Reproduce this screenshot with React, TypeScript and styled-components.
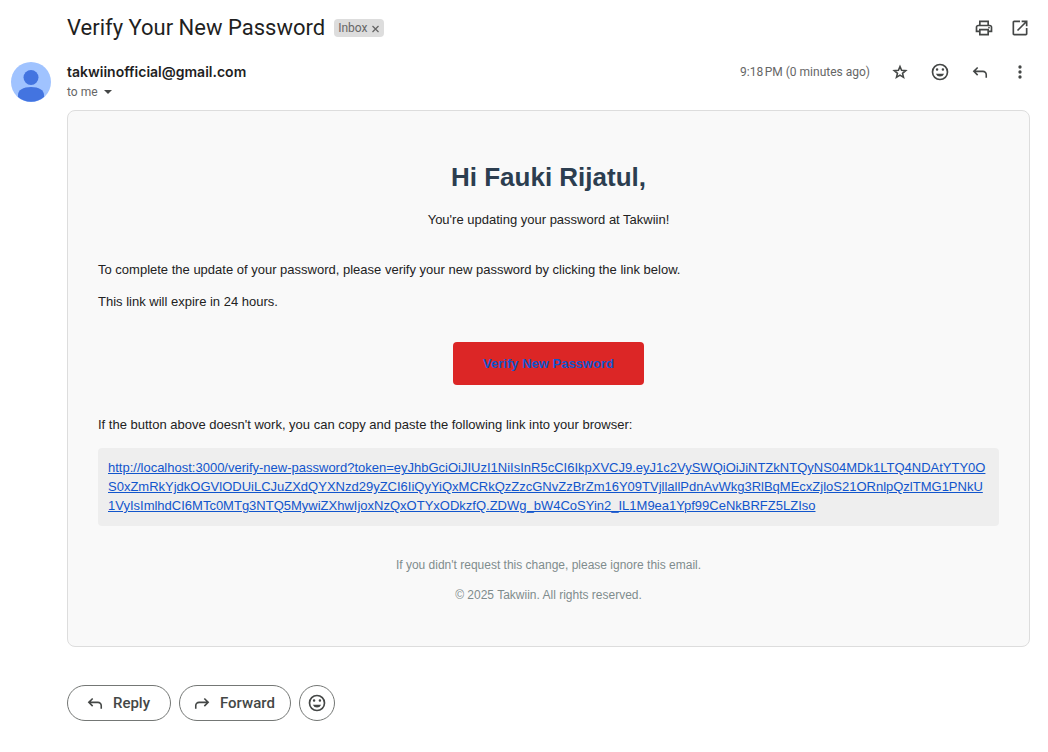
import React from "react";
import styled, { createGlobalStyle } from "styled-components";

const GlobalStyle = createGlobalStyle`
  * { box-sizing: border-box; }
  body { margin: 0; background: #fff; color: #222; font-family: Roboto, "Liberation Sans", sans-serif; }
  button { font-family: inherit; }
`;

const Page = styled.main`
  display: flex;
  flex-direction: column;
  padding: 10px 18px 31px 11px;
`;

const Bar = styled.header`
  display: flex;
  align-items: center;
  height: 36px;
  padding-left: 56px;
`;

const Title = styled.h1`
  margin: 0 9px 0 0;
  font-size: 22px;
  font-weight: 400;
  line-height: 28px;
  color: #1f1f1f;
`;

const Label = styled.span`
  display: flex;
  align-items: center;
  gap: 4px;
  height: 18px;
  padding: 0 4px;
  border-radius: 4px;
  background: #ddd;
  color: #666;
  font-size: 12px;
  line-height: 18px;
`;

const IconButton = styled.button`
  display: flex;
  align-items: center;
  justify-content: center;
  width: 20px;
  height: 20px;
  padding: 0;
  border: 0;
  background: none;
  color: #444746;
`;

const RemoveButton = styled(IconButton)`
  width: 9px;
  height: 18px;
  color: #666;
`;

const Actions = styled.div<{ $gap: number }>`
  display: flex;
  align-items: center;
  gap: ${(p) => p.$gap}px;
  height: 20px;
  margin-left: auto;
`;

const Sender = styled.section`
  display: flex;
  height: 64px;
  padding-top: 16px;
`;

const Avatar = styled.svg`
  width: 40px;
  height: 40px;
  margin-right: 16px;
`;

const Names = styled.div`
  display: flex;
  flex-direction: column;
`;

const Address = styled.h2`
  margin: 0;
  font: 600 14px/20px Inter, "Liberation Sans", sans-serif;
  color: #1f1f1f;
`;

const Recipient = styled.button`
  display: flex;
  align-items: center;
  gap: 6px;
  padding: 0;
  border: 0;
  background: none;
  color: #666;
  font-size: 12px;
  line-height: 20px;
`;

const Time = styled.time`
  color: #666;
  font-size: 12px;
  line-height: 20px;
`;

const Message = styled.article`
  margin-left: 56px;
  padding: 30px;
  border: 1px solid #ddd;
  border-radius: 8px;
  background: #f9f9f9;
  color: #222;
  font-family: "Liberation Sans", Arial, sans-serif;
  font-size: 13px;
  line-height: 20px;
`;

const Intro = styled.div`
  padding: 20px 0 18px;
  text-align: center;
`;

const Greeting = styled.h2`
  margin: 0 0 17px;
  color: #2c3e50;
  font-size: 26px;
  line-height: 32px;
`;

const Text = styled.p`
  margin: 0 0 12px;
`;

const Cta = styled.div`
  display: flex;
  justify-content: center;
  padding: 18px 0 30px;
`;

const CtaLink = styled.a`
  padding: 12px 30px;
  border-radius: 4px;
  background: #dc2626;
  color: #15c;
  font-weight: 700;
  line-height: 19px;
  text-decoration: none;
`;

const LinkBox = styled.p`
  margin: 13px 0 0;
  padding: 10px 10px 11px;
  border-radius: 4px;
  background: #eee;
  line-height: 19px;
  word-break: break-all;
`;

const Url = styled.a`
  color: #15c;
`;

const Footer = styled.footer`
  display: flow-root;
  padding-top: 30px;
  color: #7f8c8d;
  font-size: 12px;
  line-height: 18px;
  text-align: center;
`;

const Replies = styled.div`
  display: flex;
  gap: 8px;
  margin: 38px 0 0 56px;
`;

const Pill = styled.button`
  display: flex;
  align-items: center;
  justify-content: center;
  gap: 8px;
  min-width: 104px;
  height: 36px;
  padding: 0 15px 0 12px;
  border: 1px solid #747775;
  border-radius: 18px;
  background: #fff;
  color: #444746;
  font-size: 15px;
  font-weight: 500;
`;

const RoundPill = styled(Pill)`
  min-width: 36px;
  padding: 0 7px;
`;

const filledIcons = {
  print:
    "M16 8V5H8v3H6V3h12v5h-2zM4 10h16H4zm14 2.5q.425 0 .713-.288T19 11.5t-.288-.712T18 10.5t-.712.288T17 11.5t.288.713.712.287zM16 19v-4H8v4h8zm2 2H6v-4H2v-6q0-1.275.875-2.137T5 8h14q1.275 0 2.138.863T22 11v6h-4v4zm2-6v-4q0-.425-.288-.712T19 10H5q-.425 0-.712.288T4 11v4h2v-2h12v2h2z",
  open: "M5 21q-.825 0-1.412-.587T3 19V5q0-.825.588-1.412T5 3h7v2H5v14h14v-7h2v7q0 .825-.587 1.413T19 21H5zm4.7-5.3-1.4-1.4L17.6 5H14V3h7v7h-2V6.4l-9.3 9.3z",
  smile:
    "M12 2a10 10 0 1 0 0 20 10 10 0 0 0 0-20zm0 18a8 8 0 1 1 0-16 8 8 0 0 1 0 16zM8.5 7.5a1.5 1.5 0 1 0 0 3 1.5 1.5 0 0 0 0-3zm7 0a1.5 1.5 0 1 0 0 3 1.5 1.5 0 0 0 0-3zM7 14a5.4 5.4 0 0 0 10 0z",
  more: "M12 20a2 2 0 1 1 0-4 2 2 0 0 1 0 4zm0-6a2 2 0 1 1 0-4 2 2 0 0 1 0 4zm0-6a2 2 0 1 1 0-4 2 2 0 0 1 0 4z",
};

const outlineIcons = {
  star: "M12 5.4l1.88 4.61 4.97.37-3.81 3.21 1.19 4.83L12 15.8l-4.23 2.62 1.19-4.83-3.81-3.21 4.97-.37z",
  reply: "M9.2 6.6L4.6 11.2l4.6 4.6M4.6 11.2H15.5a4 4 0 0 1 4 4V19",
  forward: "M14.8 6.6l4.6 4.6-4.6 4.6M19.4 11.2H8.5a4 4 0 0 0-4 4V19",
};

function FilledIcon({ name }: { name: keyof typeof filledIcons }) {
  return (
    <svg width="20" height="20" viewBox="0 0 24 24" fill="currentColor" aria-hidden="true">
      <path d={filledIcons[name]} />
    </svg>
  );
}

function OutlineIcon({ name }: { name: keyof typeof outlineIcons }) {
  return (
    <svg width="20" height="20" viewBox="0 0 24 24" fill="none" stroke="currentColor" strokeWidth="1.9" aria-hidden="true">
      <path d={outlineIcons[name]} />
    </svg>
  );
}

const verifyUrl =
  "http://localhost:3000/verify-new-password?token=eyJhbGciOiJIUzI1NiIsInR5cCI6IkpXVCJ9.eyJ1c2VySWQiOiJiNTZkNTQyNS04MDk1LTQ4NDAtYTY0OS0xZmRkYjdkOGVlODUiLCJuZXdQYXNzd29yZCI6IiQyYiQxMCRkQzZzcGNvZzBrZm16Y09TVjllallPdnAvWkg3RlBqMEcxZjloS21ORnlpQzlTMG1PNkU1VyIsImlhdCI6MTc0MTg3NTQ5MywiZXhwIjoxNzQxOTYxODkzfQ.ZDWg_bW4CoSYin2_IL1M9ea1Ypf99CeNkBRFZ5LZIso";

export default function App() {
  return (
    <Page>
      <GlobalStyle />
      <Bar>
        <Title>Verify Your New Password</Title>
        <Label>
          Inbox
          <RemoveButton aria-label="Remove label Inbox">
            <svg width="9" height="9" viewBox="0 0 9 9" stroke="currentColor" strokeWidth="1.3">
              <path d="M1.5 2l6 6M7.5 2l-6 6" />
            </svg>
          </RemoveButton>
        </Label>
        <Actions $gap={16}>
          <IconButton aria-label="Print"><FilledIcon name="print" /></IconButton>
          <IconButton aria-label="Open in new window"><FilledIcon name="open" /></IconButton>
        </Actions>
      </Bar>
      <Sender>
        <Avatar viewBox="0 0 40 40" aria-hidden="true">
          <circle cx="20" cy="20" r="20" fill="#a0c3ff" />
          <circle cx="20" cy="15.5" r="7.5" fill="#4374e0" />
          <path d="M7 35v-2c0-5 5-8 13-8s13 3 13 8v2a20 20 0 0 1-26 0z" fill="#4374e0" />
        </Avatar>
        <Names>
          <Address>takwiinofficial@gmail.com</Address>
          <Recipient>
            to me
            <svg width="8" height="4" viewBox="0 0 8 4" fill="#444746" aria-hidden="true">
              <path d="M0 0h8L4 4z" />
            </svg>
          </Recipient>
        </Names>
        <Actions $gap={20}>
          <Time>9:18{"\u202f"}PM (0 minutes ago)</Time>
          <IconButton aria-label="Star"><OutlineIcon name="star" /></IconButton>
          <IconButton aria-label="Add reaction"><FilledIcon name="smile" /></IconButton>
          <IconButton aria-label="Reply"><OutlineIcon name="reply" /></IconButton>
          <IconButton aria-label="More"><FilledIcon name="more" /></IconButton>
        </Actions>
      </Sender>
      <Message>
        <Intro>
          <Greeting>Hi Fauki Rijatul,</Greeting>
          <Text>You're updating your password at Takwiin!</Text>
        </Intro>
        <Text>To complete the update of your password, please verify your new password by clicking the link below.</Text>
        <Text>This link will expire in 24 hours.</Text>
        <Cta><CtaLink href="#verify">Verify New Password</CtaLink></Cta>
        <Text>If the button above doesn't work, you can copy and paste the following link into your browser:</Text>
        <LinkBox><Url href="#verify">{verifyUrl}</Url></LinkBox>
        <Footer>
          <Text>If you didn't request this change, please ignore this email.</Text>
          <Text>© 2025 Takwiin. All rights reserved.</Text>
        </Footer>
      </Message>
      <Replies>
        <Pill><OutlineIcon name="reply" />Reply</Pill>
        <Pill><OutlineIcon name="forward" />Forward</Pill>
        <RoundPill aria-label="Add reaction"><FilledIcon name="smile" /></RoundPill>
      </Replies>
    </Page>
  );
}
